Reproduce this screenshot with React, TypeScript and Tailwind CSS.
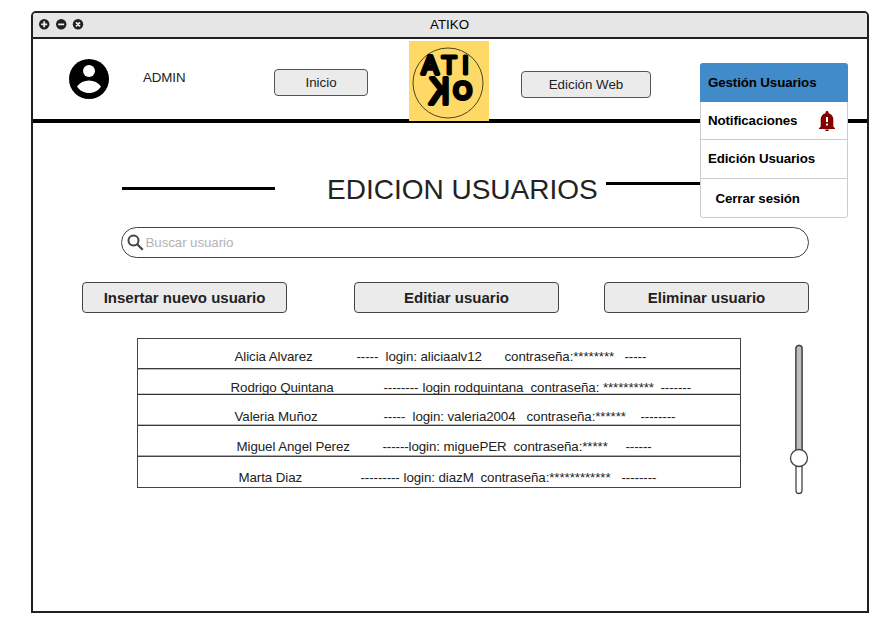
import type { ReactNode } from "react";

const UserCircle = () => (
  <svg className="mt-[20px] ml-[36px] h-[40px] w-[40px]" viewBox="0 0 40 40">
    <circle cx="20" cy="20" r="20" fill="#000" />
    <circle cx="20" cy="12" r="6" fill="#fff" />
    <path d="M8 27.500c2.700-4 7-6 12-6s9.300 2 12 6c-2.700 4.200-7 6.500-12 6.500s-9.300-2.300-12-6.500z" fill="#fff" />
  </svg>
);

const Logo = () => (
  <svg className="relative mt-[2px] ml-[41px] h-[80px] w-[80px]" viewBox="0 0 80 80">
    <rect width="80" height="80" fill="#ffd966" />
    <circle cx="39" cy="42" r="35" fill="none" stroke="#3a3218" strokeWidth="0.900" />
    <g
      fontFamily="'Liberation Sans', Arial, sans-serif"
      fill="#000"
      stroke="#000"
      strokeLinejoin="round"
      strokeWidth="3.800"
    >
      <text x="12.800" y="33" fontSize="25">A</text>
      <text x="32.400" y="32.800" fontSize="25" strokeWidth="3">T</text>
      <text x="53" y="32.800" fontSize="25" strokeWidth="3">I</text>
      <text transform="translate(40.500 63) scale(-0.830 1)" fontSize="37" strokeWidth="4.200">K</text>
      <text x="44.600" y="58" fontSize="23.500" strokeWidth="4">O</text>
    </g>
  </svg>
);

const BellAlert = () => (
  <svg className="mt-px h-[20px] w-[16px]" viewBox="0 0 16 20" fill="#800000">
    <path d="M8 0c.9 0 1.500.7 1.500 1.500v.7C12.400 2.900 14.300 5.400 14.300 8v7.500l1.700 1.700v.8H0v-.8l1.700-1.700V8c0-2.600 1.900-5.100 4.800-5.800v-.7C6.500.7 7.100 0 8 0zM6 18.500h4c0 1-.9 1.500-2 1.500s-2-.5-2-1.500z" />
    <path d="M7 6h2v5H7zM7 12.500h2v2H7z" fill="#fff" />
  </svg>
);

const WindowDots = () => (
  <svg className="mt-[6px] ml-[6px] h-[11px] w-[46px]" viewBox="0 0 46 11">
    <g fill="#231f20">
      <circle cx="5.200" cy="5.300" r="5.200" />
      <circle cx="22.200" cy="5.300" r="5.200" />
      <circle cx="39" cy="5.300" r="5.200" />
    </g>
    <path d="M2.200 5.300h6M5.200 2.300v6M19.200 5.300h6M37 3.300l4 4M41 3.300l-4 4" stroke="#eee" strokeWidth="1.800" fill="none" />
  </svg>
);

const NavButton = ({ className, children }: { className: string; children: ReactNode }) => (
  <button className={`flex h-[27px] items-center justify-center rounded-[4px] border-[1.500px] border-[#555] bg-[#ebebeb] text-[13.330px] text-[#222] ${className}`}>
    {children}
  </button>
);

const ActionButton = ({ children }: { children: ReactNode }) => (
  <button className="flex h-[31px] w-[205px] items-center justify-center rounded-[4px] border border-[#444] bg-[#ebebeb] pt-[2px] text-[15px] font-bold text-[#222]">
    {children}
  </button>
);

const Row = ({ className, children }: { className: string; children: ReactNode }) => (
  <div className={`flex items-start whitespace-pre text-[13.330px] leading-[16px] tracking-[-0.080px] ${className}`}>{children}</div>
);

export default function App() {
  return (
    <div className="h-[642px] w-[892px] overflow-hidden bg-white pt-[11px] pl-[31px] font-['Liberation_Sans',Arial,sans-serif] text-[#222]">
      <div className="relative h-[602px] w-[838px] rounded-t-[5px] border-2 border-[#231f20]">
        <div className="flex h-[26px] rounded-t-[3px] border-b-2 border-[#231f20] bg-[#e6e6e6]">
          <WindowDots />
          <span className="mt-[4px] ml-[345px] text-[13.330px] leading-[16px] text-black">ATIKO</span>
        </div>

        <header className="flex h-[84px] items-start border-b-4 border-black">
          <UserCircle />
          <span className="mt-[31px] ml-[34px] w-[131px] text-[13.330px] leading-[16px] tracking-[-0.100px]">ADMIN</span>
          <NavButton className="mt-[30px] w-[94px]">Inicio</NavButton>
          <Logo />
          <NavButton className="mt-[32px] ml-[32px] w-[130px]">Edición Web</NavButton>
        </header>

        <nav className="absolute top-[50px] left-[667px] w-[148px] rounded-[3px] border border-[#ccc] bg-white text-[13.330px] font-bold tracking-[-0.120px] text-black">
          <div className="-mx-px -mt-px flex h-[39px] items-center rounded-t-[3px] bg-[#428bca] pl-[8px]">Gestión Usuarios</div>
          <div className="flex h-[38px] items-center justify-between border-b border-[#ccc] pr-[12px] pl-[7px]">
            Notificaciones
            <BellAlert />
          </div>
          <div className="flex h-[39px] items-center border-b border-[#ccc] pb-[1px] pl-[7px]">Edición Usuarios</div>
          <div className="flex h-[38px] items-center pt-[2px] pl-[14.500px]">Cerrar sesión</div>
        </nav>

        <div className="flex h-[104px] items-start">
          <div className="mt-[64px] ml-[89px] h-[3px] w-[153px] bg-black" />
          <h1 className="mt-[51px] ml-[52px] w-[279px] whitespace-nowrap text-[28px] leading-[32px]">EDICION USUARIOS</h1>
          <div className="mt-[59px] h-[3px] w-[94px] bg-black" />
        </div>

        <div className="ml-[88px] flex h-[31px] w-[688px] items-center rounded-full border border-[#444] pl-[5px]">
          <svg className="h-[17px] w-[17px]" viewBox="0 0 17 17" fill="none" stroke="#444">
            <circle cx="6.500" cy="6.500" r="5" strokeWidth="2" />
            <path d="M10.200 10.200l5.500 5.500" strokeWidth="2.200" />
          </svg>
          <span className="ml-[1.500px] text-[13.330px] tracking-[-0.080px] text-[#b3b3b3]">Buscar usuario</span>
        </div>

        <div className="mt-[24px] ml-[49px] flex w-[727px]">
          <ActionButton>Insertar nuevo usuario</ActionButton>
          <div className="w-[67px]" />
          <ActionButton>Editiar usuario</ActionButton>
          <div className="w-[45px]" />
          <ActionButton>Eliminar usuario</ActionButton>
        </div>

        <div className="mt-[24px] ml-[104px] flex items-start">
          <div className="mt-px h-[150px] w-[604px] border border-[#444]">
            <Row className="h-[30px] border-b border-[#3a3a3a] pt-[10px] pl-[96.500px] shadow-[0_1px_0_#bbb]">
              <span className="w-[122px]">Alicia Alvarez</span>
              <span className="w-[29px]">-----</span>
              <span className="w-[119px]">login: aliciaalv12</span>
              <span className="w-[120px]">contraseña:********</span>
              <span>-----</span>
            </Row>
            <Row className="h-[26px] border-b border-[#333] pt-[11px] pl-[92.500px] shadow-[inset_0_-1px_0_#ccc]">
              <span className="w-[153px]">Rodrigo Quintana</span>
              <span className="w-[39px]">--------</span>
              <span className="w-[108px]">login rodquintana</span>
              <span className="w-[130px]">contraseña: **********</span>
              <span>-------</span>
            </Row>
            <Row className="h-[31px] border-b border-[#3a3a3a] pt-[14px] pl-[96.500px] shadow-[inset_0_-1px_0_#bbb]">
              <span className="w-[149px]">Valeria Muñoz</span>
              <span className="w-[29px]">-----</span>
              <span className="w-[114px]">login: valeria2004</span>
              <span className="w-[114px]">contraseña:******</span>
              <span>--------</span>
            </Row>
            <Row className="h-[31px] border-b border-[#444] pt-[13px] pl-[98.500px] shadow-[inset_0_-1px_0_#aaa]">
              <span className="w-[146px]">Miguel Angel Perez</span>
              <span className="w-[26px]">------</span>
              <span className="w-[105px]">login: miguePER</span>
              <span className="w-[112px]">contraseña:*****</span>
              <span>------</span>
            </Row>
            <Row className="h-[29px] pt-[13px] pl-[100.500px]">
              <span className="w-[122px]">Marta Diaz</span>
              <span className="w-[43px]">---------</span>
              <span className="w-[77px]">login: diazM</span>
              <span className="w-[141px]">contraseña:************</span>
              <span>--------</span>
            </Row>
          </div>

          <svg className="mt-[7px] ml-[48px] h-[151px] w-[20px]" viewBox="0 0 20 151" stroke="#444" strokeWidth="1.300">
            <rect x="7" y="1.500" width="6" height="148" rx="3" fill="#fff" />
            <path d="M7 113V4.500a3 3 0 0 1 6 0v108.500z" fill="#bfbfbf" />
            <circle cx="10" cy="114" r="8.500" fill="#fff" />
          </svg>
        </div>
      </div>
    </div>
  );
}
